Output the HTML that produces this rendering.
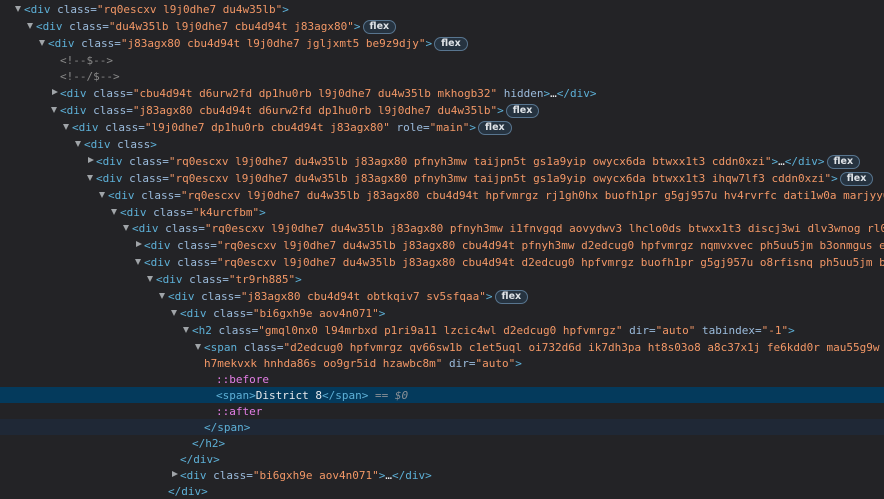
<!DOCTYPE html>
<html><head><meta charset="utf-8"><style>
html,body{margin:0;padding:0;background:#232326;width:884px;height:494px;overflow:hidden}
.r{position:absolute;left:0;width:884px;height:16px;line-height:17px;white-space:pre;font-family:"DejaVu Sans Mono",monospace;font-size:11px;color:#9bbbdc;overflow:hidden}
.r .i{position:absolute;top:0}
.t{color:#5db0d7}.a{color:#9bbbdc}.v{color:#f29766}.c{color:#898989}.p{color:#e27ee4}.w{color:#e8eaed}.g{color:#8a9096;font-style:italic}
.dn,.rt{position:absolute;width:0;height:0}
.dn{top:5px;border-left:3.5px solid transparent;border-right:3.5px solid transparent;border-top:6px solid #a0a4a8}
.rt{top:4px;border-top:3.5px solid transparent;border-bottom:3.5px solid transparent;border-left:6px solid #a0a4a8}
.b{display:inline-block;height:12px;line-height:12px;padding:0 6px;margin-left:2px;border:1px solid #58758f;background:#263340;border-radius:7px;font-family:"DejaVu Sans",sans-serif;font-size:9.5px;font-weight:bold;color:#dfe3e7;vertical-align:1px}
.sel{background:#043a5c}.hov{background:#1f2836}
</style></head><body>
<div class="r" style="top:1px"><span class="dn" style="left:15px"></span><span class="i" style="left:24px"><span class="t">&lt;div</span> class=<span class="v">"rq0escxv l9j0dhe7 du4w35lb"</span><span class="t">&gt;</span></span></div>
<div class="r" style="top:18px"><span class="dn" style="left:27px"></span><span class="i" style="left:36px"><span class="t">&lt;div</span> class=<span class="v">"du4w35lb l9j0dhe7 cbu4d94t j83agx80"</span><span class="t">&gt;</span><span class="b">flex</span></span></div>
<div class="r" style="top:35px"><span class="dn" style="left:39px"></span><span class="i" style="left:48px"><span class="t">&lt;div</span> class=<span class="v">"j83agx80 cbu4d94t l9j0dhe7 jgljxmt5 be9z9djy"</span><span class="t">&gt;</span><span class="b">flex</span></span></div>
<div class="r" style="top:52px"><span class="i c" style="left:60px">&lt;!--$--&gt;</span></div>
<div class="r" style="top:68px"><span class="i c" style="left:60px">&lt;!--/$--&gt;</span></div>
<div class="r" style="top:85px"><span class="rt" style="left:52px"></span><span class="i" style="left:60px"><span class="t">&lt;div</span> class=<span class="v">"cbu4d94t d6urw2fd dp1hu0rb l9j0dhe7 du4w35lb mkhogb32"</span> hidden<span class="t">&gt;</span><span class="w">…</span><span class="t">&lt;/div&gt;</span></span></div>
<div class="r" style="top:102px"><span class="dn" style="left:51px"></span><span class="i" style="left:60px"><span class="t">&lt;div</span> class=<span class="v">"j83agx80 cbu4d94t d6urw2fd dp1hu0rb l9j0dhe7 du4w35lb"</span><span class="t">&gt;</span><span class="b">flex</span></span></div>
<div class="r" style="top:119px"><span class="dn" style="left:63px"></span><span class="i" style="left:72px"><span class="t">&lt;div</span> class=<span class="v">"l9j0dhe7 dp1hu0rb cbu4d94t j83agx80"</span> role=<span class="v">"main"</span><span class="t">&gt;</span><span class="b">flex</span></span></div>
<div class="r" style="top:136px"><span class="dn" style="left:75px"></span><span class="i" style="left:84px"><span class="t">&lt;div</span> class<span class="t">&gt;</span></span></div>
<div class="r" style="top:153px"><span class="rt" style="left:88px"></span><span class="i" style="left:96px"><span class="t">&lt;div</span> class=<span class="v">"rq0escxv l9j0dhe7 du4w35lb j83agx80 pfnyh3mw taijpn5t gs1a9yip owycx6da btwxx1t3 cddn0xzi"</span><span class="t">&gt;</span><span class="w">…</span><span class="t">&lt;/div&gt;</span><span class="b">flex</span></span></div>
<div class="r" style="top:170px"><span class="dn" style="left:87px"></span><span class="i" style="left:96px"><span class="t">&lt;div</span> class=<span class="v">"rq0escxv l9j0dhe7 du4w35lb j83agx80 pfnyh3mw taijpn5t gs1a9yip owycx6da btwxx1t3 ihqw7lf3 cddn0xzi"</span><span class="t">&gt;</span><span class="b">flex</span></span></div>
<div class="r" style="top:187px"><span class="dn" style="left:99px"></span><span class="i" style="left:108px"><span class="t">&lt;div</span> class=<span class="v">"rq0escxv l9j0dhe7 du4w35lb j83agx80 cbu4d94t hpfvmrgz rj1gh0hx buofh1pr g5gj957u hv4rvrfc dati1w0a marjyy6v</span></span></div>
<div class="r" style="top:204px"><span class="dn" style="left:111px"></span><span class="i" style="left:120px"><span class="t">&lt;div</span> class=<span class="v">"k4urcfbm"</span><span class="t">&gt;</span></span></div>
<div class="r" style="top:220px"><span class="dn" style="left:123px"></span><span class="i" style="left:132px"><span class="t">&lt;div</span> class=<span class="v">"rq0escxv l9j0dhe7 du4w35lb j83agx80 pfnyh3mw i1fnvgqd aovydwv3 lhclo0ds btwxx1t3 discj3wi dlv3wnog rl04r1d5</span></span></div>
<div class="r" style="top:237px"><span class="rt" style="left:136px"></span><span class="i" style="left:144px"><span class="t">&lt;div</span> class=<span class="v">"rq0escxv l9j0dhe7 du4w35lb j83agx80 cbu4d94t pfnyh3mw d2edcug0 hpfvmrgz nqmvxvec ph5uu5jm b3onmgus e5nlhep0</span></span></div>
<div class="r" style="top:254px"><span class="dn" style="left:135px"></span><span class="i" style="left:144px"><span class="t">&lt;div</span> class=<span class="v">"rq0escxv l9j0dhe7 du4w35lb j83agx80 cbu4d94t d2edcug0 hpfvmrgz buofh1pr g5gj957u o8rfisnq ph5uu5jm b3onmgus</span></span></div>
<div class="r" style="top:271px"><span class="dn" style="left:147px"></span><span class="i" style="left:156px"><span class="t">&lt;div</span> class=<span class="v">"tr9rh885"</span><span class="t">&gt;</span></span></div>
<div class="r" style="top:288px"><span class="dn" style="left:159px"></span><span class="i" style="left:168px"><span class="t">&lt;div</span> class=<span class="v">"j83agx80 cbu4d94t obtkqiv7 sv5sfqaa"</span><span class="t">&gt;</span><span class="b">flex</span></span></div>
<div class="r" style="top:305px"><span class="dn" style="left:171px"></span><span class="i" style="left:180px"><span class="t">&lt;div</span> class=<span class="v">"bi6gxh9e aov4n071"</span><span class="t">&gt;</span></span></div>
<div class="r" style="top:322px"><span class="dn" style="left:183px"></span><span class="i" style="left:192px"><span class="t">&lt;h2</span> class=<span class="v">"gmql0nx0 l94mrbxd p1ri9a11 lzcic4wl d2edcug0 hpfvmrgz"</span> dir=<span class="v">"auto"</span> tabindex=<span class="v">"-1"</span><span class="t">&gt;</span></span></div>
<div class="r" style="top:339px"><span class="dn" style="left:195px"></span><span class="i" style="left:204px"><span class="t">&lt;span</span> class=<span class="v">"d2edcug0 hpfvmrgz qv66sw1b c1et5uql oi732d6d ik7dh3pa ht8s03o8 a8c37x1j fe6kdd0r mau55g9w c8b282yb</span></span></div>
<div class="r" style="top:355px"><span class="i" style="left:204px"><span class="v">h7mekvxk hnhda86s oo9gr5id hzawbc8m"</span> dir=<span class="v">"auto"</span><span class="t">&gt;</span></span></div>
<div class="r" style="top:371px"><span class="i p" style="left:216px">::before</span></div>
<div class="r sel" style="top:387px"><span class="i" style="left:216px"><span class="t">&lt;span&gt;</span><span class="w">District 8</span><span class="t">&lt;/span&gt;</span><span class="g"> == $0</span></span></div>
<div class="r" style="top:403px"><span class="i p" style="left:216px">::after</span></div>
<div class="r hov" style="top:419px"><span class="i t" style="left:204px">&lt;/span&gt;</span></div>
<div class="r" style="top:435px"><span class="i t" style="left:192px">&lt;/h2&gt;</span></div>
<div class="r" style="top:451px"><span class="i t" style="left:180px">&lt;/div&gt;</span></div>
<div class="r" style="top:467px"><span class="rt" style="left:172px"></span><span class="i" style="left:180px"><span class="t">&lt;div</span> class=<span class="v">"bi6gxh9e aov4n071"</span><span class="t">&gt;</span><span class="w">…</span><span class="t">&lt;/div&gt;</span></span></div>
<div class="r" style="top:483px"><span class="i t" style="left:168px">&lt;/div&gt;</span></div>
</body></html>
